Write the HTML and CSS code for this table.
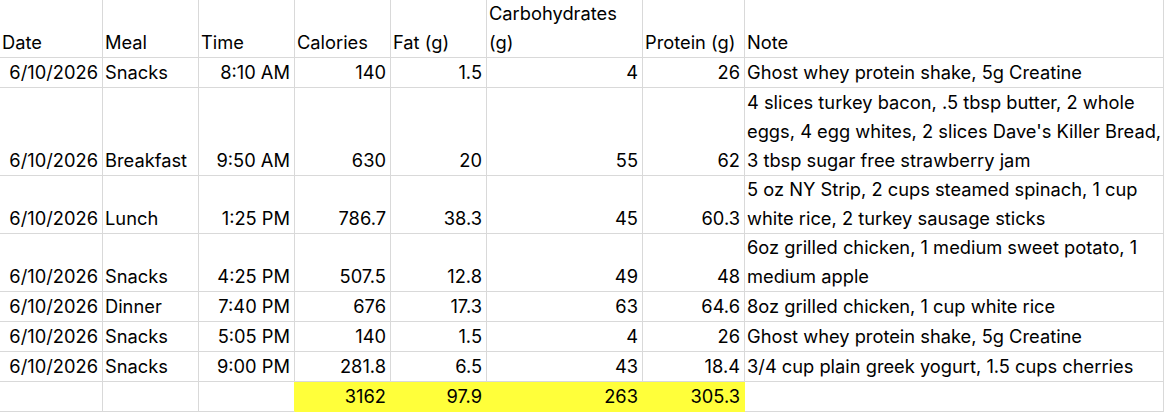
FILE: index.html
```html
<!DOCTYPE html>
<html lang="en">
<head>
<meta charset="utf-8">
<title>Food Log</title>
<link rel="stylesheet" href="styles.css">
</head>
<body>
<div class="sheet">
  <div class="c">Date</div>
  <div class="c">Meal</div>
  <div class="c">Time</div>
  <div class="c">Calories</div>
  <div class="c">Fat (g)</div>
  <div class="c"><span>Carbohydrates<br>(g)</span></div>
  <div class="c">Protein (g)</div>
  <div class="c">Note</div>

  <div class="c n">6/10/2026</div>
  <div class="c">Snacks</div>
  <div class="c n">8:10 AM</div>
  <div class="c n">140</div>
  <div class="c n">1.5</div>
  <div class="c n">4</div>
  <div class="c n">26</div>
  <div class="c">Ghost whey protein shake, 5g Creatine</div>

  <div class="c n">6/10/2026</div>
  <div class="c">Breakfast</div>
  <div class="c n">9:50 AM</div>
  <div class="c n">630</div>
  <div class="c n">20</div>
  <div class="c n">55</div>
  <div class="c n">62</div>
  <div class="c"><span>4 slices turkey bacon, .5 tbsp butter, 2 whole<br>eggs, 4 egg whites, 2 slices Dave's Killer Bread,<br>3 tbsp sugar free strawberry jam</span></div>

  <div class="c n">6/10/2026</div>
  <div class="c">Lunch</div>
  <div class="c n">1:25 PM</div>
  <div class="c n">786.7</div>
  <div class="c n">38.3</div>
  <div class="c n">45</div>
  <div class="c n">60.3</div>
  <div class="c"><span>5 oz NY Strip, 2 cups steamed spinach, 1 cup<br>white rice, 2 turkey sausage sticks</span></div>

  <div class="c n">6/10/2026</div>
  <div class="c">Snacks</div>
  <div class="c n">4:25 PM</div>
  <div class="c n">507.5</div>
  <div class="c n">12.8</div>
  <div class="c n">49</div>
  <div class="c n">48</div>
  <div class="c"><span>6oz grilled chicken, 1 medium sweet potato, 1<br>medium apple</span></div>

  <div class="c n">6/10/2026</div>
  <div class="c">Dinner</div>
  <div class="c n">7:40 PM</div>
  <div class="c n">676</div>
  <div class="c n">17.3</div>
  <div class="c n">63</div>
  <div class="c n">64.6</div>
  <div class="c">8oz grilled chicken, 1 cup white rice</div>

  <div class="c n">6/10/2026</div>
  <div class="c">Snacks</div>
  <div class="c n">5:05 PM</div>
  <div class="c n">140</div>
  <div class="c n">1.5</div>
  <div class="c n">4</div>
  <div class="c n">26</div>
  <div class="c">Ghost whey protein shake, 5g Creatine</div>

  <div class="c n">6/10/2026</div>
  <div class="c">Snacks</div>
  <div class="c n">9:00 PM</div>
  <div class="c n">281.8</div>
  <div class="c n">6.5</div>
  <div class="c n">43</div>
  <div class="c n">18.4</div>
  <div class="c">3/4 cup plain greek yogurt, 1.5 cups cherries</div>

  <div class="c"></div>
  <div class="c"></div>
  <div class="c before-hl"></div>
  <div class="c n hl">3162</div>
  <div class="c n hl">97.9</div>
  <div class="c n hl">263</div>
  <div class="c n hl">305.3</div>
  <div class="c"></div>
</div>
</body>
</html>
```

FILE: styles.css
```css
html, body {
  margin: 0;
  padding: 0;
  background: #ffffff;
}

body {
  font-family: Inter, "Liberation Sans", Arial, sans-serif;
  font-size: 18.3px;
  color: #000000;
  width: 1164px;
  height: 412px;
  overflow: hidden;
}

.sheet {
  display: grid;
  grid-template-columns: 103px 96px 96px 96px 96px 156px 102px 1fr;
  grid-template-rows: 58px 30px 88px 58px 58px 30px 30px 30px 30px;
}

.c {
  box-sizing: border-box;
  border-right: 1px solid #d9d9d9;
  border-bottom: 1px solid #d9d9d9;
  display: flex;
  align-items: flex-end;
  justify-content: flex-start;
  padding: 0 4px 0 2px;
  line-height: 29px;
  white-space: nowrap;
  overflow: hidden;
}

.n {
  justify-content: flex-end;
}

.hl {
  background: #ffff3a;
  border-right-color: #ffff3a;
  border-bottom-color: #ffff3a;
}

.before-hl {
  border-right-color: #ffff3a;
}
```
